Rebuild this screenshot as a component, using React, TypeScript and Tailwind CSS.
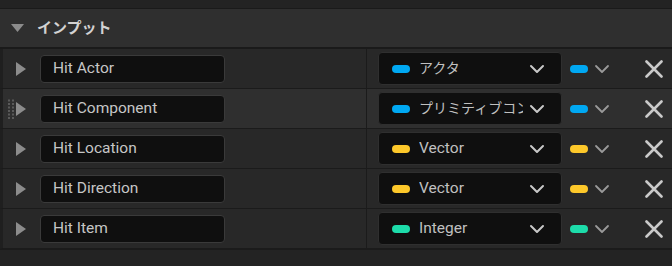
import { ChevronDown } from "lucide-react";

type Pin = {
    name: string;
    type: string;
    color: string;
    jp?: boolean;
    hovered?: boolean;
};

const pins: Pin[] = [
    { name: "Hit Actor", type: "アクタ", color: "bg-[#00a8f2]", jp: true },
    { name: "Hit Component", type: "プリミティブコンポーネント", color: "bg-[#00a8f2]", jp: true, hovered: true },
    { name: "Hit Location", type: "Vector", color: "bg-[#fdc82a]" },
    { name: "Hit Direction", type: "Vector", color: "bg-[#fdc82a]" },
    { name: "Hit Item", type: "Integer", color: "bg-[#1ddcaa]" },
];

function DragHandle() {
    return (
        <svg width="8" height="20" viewBox="0 0 8 20" className="absolute left-[4px] top-1/2 -translate-y-1/2">
            {[0, 1, 2, 3, 4, 5].map((r) =>
                [0, 1].map((c) => (
                    <rect key={`${r}-${c}`} x={c * 4 + 1} y={r * 3.5 + 0.5} width="2" height="2" fill="#5a5a5a" />
                ))
            )}
        </svg>
    );
}

function PinRow({ pin }: { pin: Pin }) {
    return (
        <div className={`relative flex h-[40px] border-b border-[#1b1b1b] border-l-[3px] border-l-[#1f1f1f] ${pin.hovered ? "bg-[#2f2f2f]" : "bg-[#282828]"}`}>
            {pin.hovered && <DragHandle />}
            {/* name column */}
            <div className="flex w-[364px] items-center border-r border-[#1b1b1b] pl-[13px]">
                <svg width="10" height="14" viewBox="0 0 10 14" className="shrink-0">
                    <path d="M0 0 L10 7 L0 14 Z" fill="#8c8c8c" />
                </svg>
                <div className="ml-[14px] flex h-[28px] w-[185px] items-center rounded-[4px] border border-[#3a3a3a] bg-[#0f0f0f] pl-[12px] text-[15.5px] text-[#c6c6c6]">
                    {pin.name}
                </div>
            </div>
            {/* type column */}
            <div className="flex flex-1 items-center pl-[11px]">
                <div className="flex h-[33px] w-[184px] items-center rounded-[4px] border border-[#2f2f2f] bg-[#0f0f0f] pl-[13px] pr-[12px]">
                    <span className={`h-[8px] w-[18px] shrink-0 rounded-full ${pin.color}`} />
                    <span className={`ml-[9px] w-[104px] overflow-hidden whitespace-nowrap text-[#c0c0c0] ${pin.jp ? "text-[14px]" : "text-[15.5px]"}`}>
                        {pin.type}
                    </span>
                    <ChevronDown className="ml-auto h-[24px] w-[24px] text-[#c8c8c8]" strokeWidth={2} />
                </div>
                <span className={`ml-[8px] h-[8px] w-[18px] shrink-0 rounded-full ${pin.color}`} />
                <ChevronDown className="ml-[2px] h-[24px] w-[24px] text-[#9a9a9a]" strokeWidth={1.8} />
                <svg width="18" height="18" viewBox="0 0 18 18" className="ml-[31px]">
                    <path d="M1.5 1.5 L16.5 16.5 M16.5 1.5 L1.5 16.5" stroke="#cacaca" strokeWidth="2.6" strokeLinecap="round" />
                </svg>
            </div>
        </div>
    );
}

export default function App() {
    return (
        <div className="h-[266px] w-[672px] overflow-hidden bg-[#232323] font-['Roboto','Noto_Sans_CJK_JP',sans-serif]">
            <div className="h-[8px]" />
            {/* section header */}
            <div className="flex h-[41px] items-center border-t border-b-2 border-[#1a1a1a] bg-[#2f2f2f] pl-[11px]">
                <svg width="13" height="8" viewBox="0 0 13 8">
                    <path d="M0 0 L13 0 L6.5 8 Z" fill="#8c8c8c" />
                </svg>
                <span className="ml-[13px] text-[15px] font-bold text-[#d2d2d2]">インプット</span>
            </div>
            {pins.map((pin) => (
                <PinRow key={pin.name} pin={pin} />
            ))}
            <div className="border-t border-[#1b1b1b]" />
        </div>
    );
}
